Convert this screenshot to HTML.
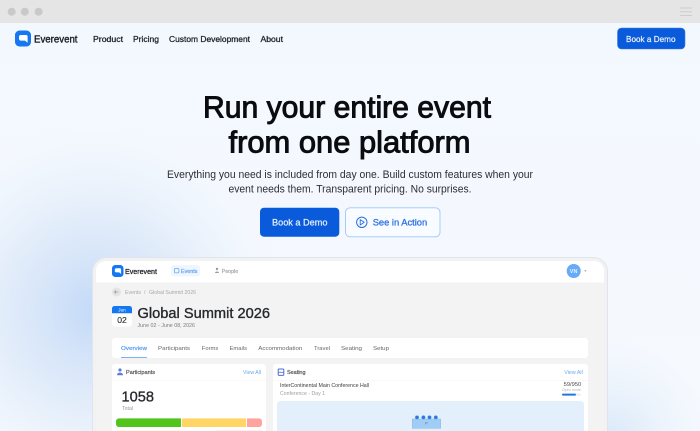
<!DOCTYPE html>
<html lang="en">
<head>
<meta charset="utf-8">
<title>Everevent</title>
<style>
html,body{margin:0;padding:0;width:700px;height:431px;overflow:hidden;background:#f4f8ff}
svg{display:block;position:absolute;left:0;top:0;filter:blur(.3px)}
text{font-family:"Liberation Sans",sans-serif;white-space:pre}
.b{font-weight:700}
</style>
</head>
<body>
<svg width="700" height="431" viewBox="0 0 700 431" xmlns="http://www.w3.org/2000/svg">
<defs>
<linearGradient id="bg" x1="0" y1="0" x2="0" y2="1"><stop offset="0" stop-color="#f3f8ff"/><stop offset="1" stop-color="#f6f9fe"/></linearGradient>
<radialGradient id="gl" gradientUnits="userSpaceOnUse" cx="95" cy="310" r="190"><stop offset="0" stop-color="#c3daf8"/><stop offset=".3" stop-color="#d8e6f9"/><stop offset=".62" stop-color="#e9f1fb"/><stop offset="1" stop-color="#f2f7fe" stop-opacity="0"/></radialGradient>
<radialGradient id="gr" gradientUnits="userSpaceOnUse" cx="610" cy="440" r="100"><stop offset="0" stop-color="#d9e8f8"/><stop offset="1" stop-color="#e6f0fb" stop-opacity="0"/></radialGradient>
<clipPath id="inner"><rect x="96" y="261" width="508" height="180" rx="10"/></clipPath>
</defs>

<rect width="700" height="431" fill="url(#bg)"/>
<rect width="300" height="431" fill="url(#gl)"/>
<rect x="500" y="300" width="200" height="131" fill="url(#gr)"/>

<!-- browser chrome -->
<rect width="700" height="23" fill="#e5e5e5"/>
<circle cx="11.7" cy="11.7" r="4" fill="#c9c9c9"/>
<circle cx="24.8" cy="11.7" r="4" fill="#c9c9c9"/>
<circle cx="38.6" cy="11.7" r="4" fill="#c9c9c9"/>
<path d="M680 8h12M680 11.7h12M680 15.5h12" stroke="#cdcdcd" stroke-width="1" fill="none"/>

<!-- nav -->
<rect x="15" y="30.5" width="16" height="16" rx="4.5" fill="#1677f2"/>
<path d="M21 35h5a1.6 1.6 0 0 1 1.6 1.6v6.2l-2.6-2.2h-4a2 2 0 0 1-2-2V37a2 2 0 0 1 2-2z" fill="#fff"/>
<text x="34" y="42.3" font-size="10.5" fill="#1a1d24" stroke="#1a1d24" stroke-width=".38" textLength="43.5" lengthAdjust="spacingAndGlyphs">Everevent</text>
<g font-size="8.6" fill="#1f222a" stroke="#1f222a" stroke-width=".3">
<text x="93" y="41.8" textLength="30" lengthAdjust="spacingAndGlyphs">Product</text>
<text x="133" y="41.8" textLength="26" lengthAdjust="spacingAndGlyphs">Pricing</text>
<text x="169" y="41.8" textLength="81" lengthAdjust="spacingAndGlyphs">Custom Development</text>
<text x="260.5" y="41.8" textLength="22.5" lengthAdjust="spacingAndGlyphs">About</text>
</g>
<rect x="617.5" y="28" width="67.5" height="21" rx="4" fill="#0a5bdb" stroke="#3f80e6" stroke-width=".6"/>
<text x="626" y="41.8" font-size="8.6" fill="#eaf2ff" stroke="#eaf2ff" stroke-width=".2" textLength="49.5" lengthAdjust="spacingAndGlyphs">Book a Demo</text>

<!-- hero -->
<text x="203" y="117.5" font-size="30.5" fill="#0b0c0f" stroke="#0b0c0f" stroke-width=".95" textLength="288" lengthAdjust="spacingAndGlyphs">Run your entire event</text>
<text x="228.5" y="152.5" font-size="30.5" fill="#0b0c0f" stroke="#0b0c0f" stroke-width=".95" textLength="242" lengthAdjust="spacingAndGlyphs">from one platform</text>
<text x="167" y="178" font-size="11.4" fill="#2b2e35" textLength="366" lengthAdjust="spacingAndGlyphs">Everything you need is included from day one. Build custom features when your</text>
<text x="228.5" y="192.5" font-size="11.4" fill="#2b2e35" textLength="243" lengthAdjust="spacingAndGlyphs">event needs them. Transparent pricing. No surprises.</text>

<rect x="260" y="207.7" width="79.3" height="29" rx="4" fill="#0a5bdb"/>
<text x="272" y="225.7" font-size="9.4" fill="#e4eefe" stroke="#e4eefe" stroke-width=".22" textLength="55.5" lengthAdjust="spacingAndGlyphs">Book a Demo</text>
<rect x="345.5" y="207.8" width="94.5" height="29" rx="4.5" fill="#f8fbff" stroke="#9cc6fb" stroke-width=".9"/>
<circle cx="361.8" cy="222.3" r="5.2" fill="none" stroke="#2a6fe0" stroke-width="1"/>
<path d="M360.2 219.6v5.4l4-2.7z" fill="none" stroke="#2a6fe0" stroke-width=".9" stroke-linejoin="round"/>
<text x="372.7" y="225.7" font-size="9.4" fill="#2a6fe0" stroke="#2a6fe0" stroke-width=".28" textLength="54.5" lengthAdjust="spacingAndGlyphs">See in Action</text>

<!-- app frame -->
<rect x="92.5" y="257.5" width="515" height="190" rx="14" fill="#f2f2f3" stroke="#dfe5ee" stroke-width="1"/>
<g clip-path="url(#inner)">
<rect x="96" y="261" width="508" height="180" fill="#f3f3f3"/>
<rect x="96" y="261" width="508" height="21.5" fill="#fff"/>
</g>

<!-- app nav -->
<rect x="112" y="265" width="11.5" height="12" rx="3.3" fill="#1677f2"/>
<path d="M116.3 268.2h3.6a1.2 1.2 0 0 1 1.2 1.2v4.6l-1.9-1.6h-2.9a1.5 1.5 0 0 1-1.5-1.5v-1.2a1.5 1.5 0 0 1 1.5-1.5z" fill="#fff"/>
<text x="125" y="274" font-size="7.2" fill="#22252b" stroke="#22252b" stroke-width=".28" textLength="32" lengthAdjust="spacingAndGlyphs">Everevent</text>
<rect x="171" y="265" width="29" height="11.5" rx="2.5" fill="#eff6ff"/>
<rect x="174.5" y="268.5" width="4.4" height="4.4" rx=".8" fill="none" stroke="#6aa4ee" stroke-width=".8"/>
<text x="181" y="273" font-size="5.2" fill="#5b9bf0" stroke="#5b9bf0" stroke-width=".16" textLength="16.5" lengthAdjust="spacingAndGlyphs">Events</text>
<circle cx="217" cy="269" r="1.2" fill="#9a9a9a"/>
<path d="M215 273c0-2 4-2 4 0z" fill="#9a9a9a"/>
<text x="221.7" y="273" font-size="5.2" fill="#a2a2a2" stroke="#a2a2a2" stroke-width=".16" textLength="16.5" lengthAdjust="spacingAndGlyphs">People</text>
<circle cx="573.7" cy="271" r="7" fill="#66aaf8"/>
<text class="b" x="569.8" y="272.9" font-size="5" fill="#eaf3fe" textLength="7.6" lengthAdjust="spacingAndGlyphs">VN</text>
<path d="M584 270.3h2.8l-1.4 1.6z" fill="#aaa"/>

<!-- breadcrumb -->
<circle cx="116.5" cy="292" r="4.5" fill="#e4e4e4"/>
<path d="M118.5 292h-4M116 290.5l-1.5 1.5 1.5 1.5" stroke="#8a8a8a" stroke-width=".6" fill="none"/>
<text x="125" y="294" font-size="5" fill="#a8a8a8" textLength="16" lengthAdjust="spacingAndGlyphs">Events</text>
<text x="144" y="294" font-size="5" fill="#a8a8a8">/</text>
<text x="149" y="294" font-size="5" fill="#a8a8a8" textLength="47" lengthAdjust="spacingAndGlyphs">Global Summit 2026</text>

<!-- event heading -->
<rect x="112" y="306" width="20" height="20.5" rx="2.5" fill="#fff"/>
<path d="M112 313.2v-4.7a2.5 2.5 0 0 1 2.5-2.5h15a2.5 2.5 0 0 1 2.5 2.5v4.7z" fill="#1677f2"/>
<text x="122" y="311.6" font-size="4.6" fill="#fff" text-anchor="middle">Jun</text>
<text x="122" y="323.2" font-size="8.6" fill="#2a2a2a" text-anchor="middle" stroke="#2a2a2a" stroke-width=".12">02</text>
<text x="137.5" y="318" font-size="14.6" fill="#26282d" stroke="#26282d" stroke-width=".34" textLength="132.5" lengthAdjust="spacingAndGlyphs">Global Summit 2026</text>
<text x="137.5" y="327" font-size="5.1" fill="#7c7c7c" textLength="57.5" lengthAdjust="spacingAndGlyphs">June 02 - June 08, 2026</text>

<!-- tabs -->
<rect x="112" y="338" width="476" height="20" rx="3" fill="#fff"/>
<text x="121" y="350.2" font-size="5.6" fill="#4f97f0" stroke="#4f97f0" stroke-width=".16" textLength="26" lengthAdjust="spacingAndGlyphs">Overview</text>
<rect x="121" y="357" width="26" height="1" fill="#7ab2f5"/>
<g font-size="5.6" fill="#666">
<text x="158" y="350.2" textLength="32" lengthAdjust="spacingAndGlyphs">Participants</text>
<text x="201.8" y="350.2" textLength="16.5" lengthAdjust="spacingAndGlyphs">Forms</text>
<text x="229.5" y="350.2" textLength="17.5" lengthAdjust="spacingAndGlyphs">Emails</text>
<text x="258.3" y="350.2" textLength="44" lengthAdjust="spacingAndGlyphs">Accommodation</text>
<text x="314" y="350.2" textLength="16" lengthAdjust="spacingAndGlyphs">Travel</text>
<text x="341" y="350.2" textLength="21" lengthAdjust="spacingAndGlyphs">Seating</text>
<text x="373" y="350.2" textLength="16" lengthAdjust="spacingAndGlyphs">Setup</text>
</g>

<!-- participants card -->
<rect x="112" y="364" width="154" height="80" rx="3" fill="#fff"/>
<rect x="112" y="380" width="154" height=".6" fill="#f4f4f4"/>
<circle cx="120" cy="370" r="1.6" fill="#5a7fd8"/>
<path d="M117 375.2c0-3.4 6-3.4 6 0z" fill="#5a7fd8"/>
<text x="126" y="374" font-size="5.4" fill="#4a4a4a" stroke="#4a4a4a" stroke-width=".16" textLength="29" lengthAdjust="spacingAndGlyphs">Participants</text>
<text x="243" y="374" font-size="5.4" fill="#6aa9f5" textLength="18" lengthAdjust="spacingAndGlyphs">View All</text>
<text x="121.5" y="401.7" font-size="14.6" fill="#26282d" stroke="#26282d" stroke-width=".3" textLength="32.5" lengthAdjust="spacingAndGlyphs">1058</text>
<text x="122" y="410" font-size="5" fill="#9a9a9a" textLength="11" lengthAdjust="spacingAndGlyphs">Total</text>
<path d="M119 418.4h62v8.6h-62a3 3 0 0 1-3-3v-2.6a3 3 0 0 1 3-3z" fill="#52c41a"/>
<rect x="182" y="418.4" width="64" height="8.6" fill="#ffd666"/>
<path d="M247 418.4h12a3 3 0 0 1 3 3v2.6a3 3 0 0 1-3 3h-12z" fill="#ffa39e"/>
<rect x="116" y="430" width="65" height="1" fill="#fffbe8"/>
<rect x="216" y="430" width="46" height="1" fill="#fff0f0"/>

<!-- seating card -->
<rect x="273" y="364" width="315" height="80" rx="3" fill="#fff"/>
<rect x="273" y="380" width="315" height=".6" fill="#f4f4f4"/>
<rect x="278.2" y="369" width="5.6" height="6.4" rx=".9" fill="none" stroke="#4a6fd0" stroke-width="1"/>
<path d="M278.5 372.3h5" stroke="#4a6fd0" stroke-width=".8"/>
<text x="287" y="374" font-size="5.4" fill="#4a4a4a" stroke="#4a4a4a" stroke-width=".16" textLength="18.5" lengthAdjust="spacingAndGlyphs">Seating</text>
<text x="564.3" y="374" font-size="5.4" fill="#6aa9f5" textLength="18.5" lengthAdjust="spacingAndGlyphs">View All</text>
<text x="280" y="387" font-size="5.2" fill="#3c3c3c" textLength="89" lengthAdjust="spacingAndGlyphs">InterContinental Main Conference Hall</text>
<text x="280" y="395" font-size="5" fill="#a0a0a0" textLength="45" lengthAdjust="spacingAndGlyphs">Conference - Day 1</text>
<text x="563.7" y="386" font-size="5.2" fill="#4a4a4a" textLength="17.5" lengthAdjust="spacingAndGlyphs">59/950</text>
<text x="562" y="391.2" font-size="3.4" fill="#b5b5b5" textLength="19" lengthAdjust="spacingAndGlyphs">Open mode</text>
<rect x="562" y="393.6" width="19" height="2" rx="1" fill="#eeeeee"/>
<rect x="562" y="393.6" width="14" height="2" rx="1" fill="#1f7ae0"/>
<rect x="277" y="401" width="307" height="40" rx="3" fill="#e3f0fc"/>
<rect x="412.3" y="419" width="28.4" height="9.3" fill="#9fcdf6" stroke="#8fb8dc" stroke-width=".5"/>
<g fill="#2f76dc" stroke="#7fb0ea" stroke-width=".4">
<circle cx="417" cy="417.4" r="1.9"/><circle cx="423.4" cy="417.4" r="1.9"/><circle cx="429.5" cy="417.4" r="1.9"/><circle cx="435.8" cy="417.4" r="1.9"/>
</g>
<text x="426.5" y="424.5" font-size="3.6" fill="#4a6a8a" text-anchor="middle">P</text>
</svg>
</body>
</html>
